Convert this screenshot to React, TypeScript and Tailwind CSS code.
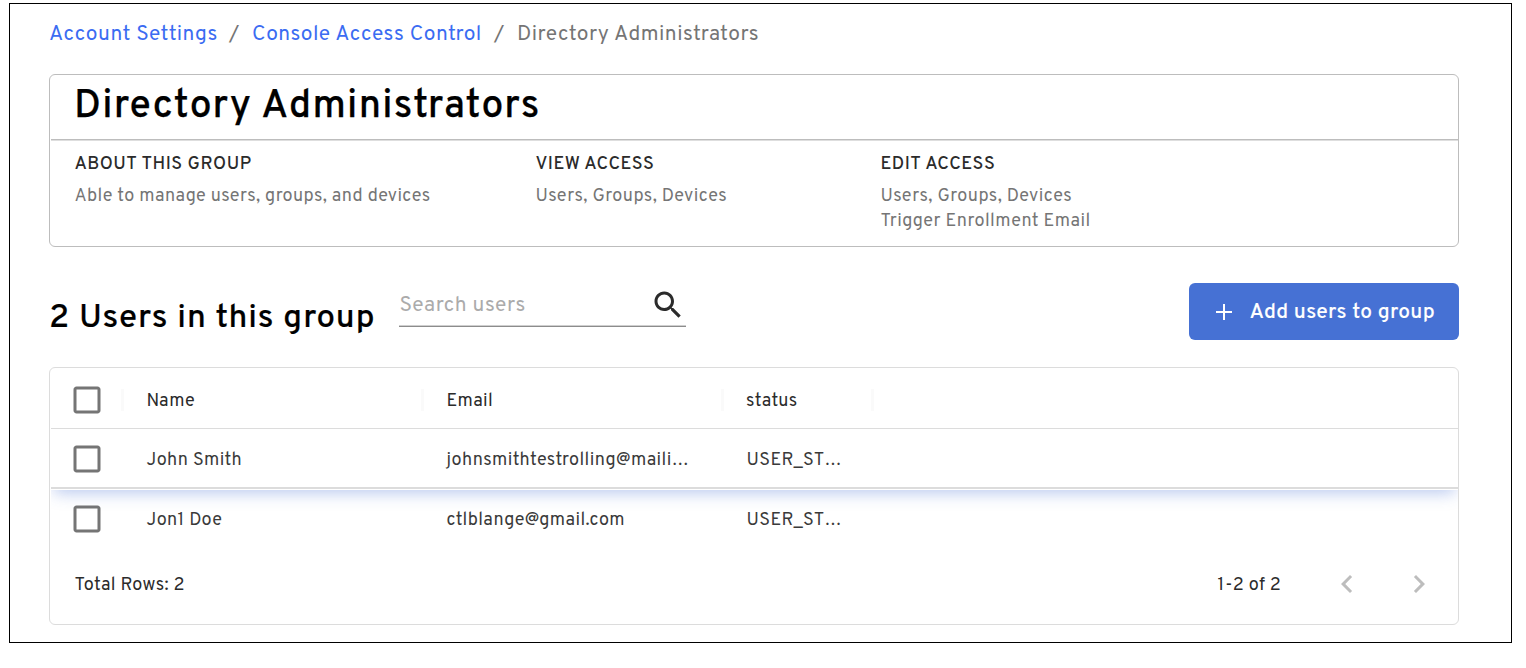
import React from "react";

const rows = [
  { name: "John Smith", email: "johnsmithtestrolling@maili…", status: "USER_ST…" },
  { name: "Jon1 Doe", email: "ctlblange@gmail.com", status: "USER_ST…" },
];

function Icon({ d, className }: { d: string; className: string }) {
  return (
    <svg viewBox="0 0 24 24" className={className} fill="currentColor" aria-hidden="true">
      <path d={d} />
    </svg>
  );
}

function Checkbox({ className }: { className: string }) {
  return (
    <span role="checkbox" aria-checked="false" className={className}>
      <Icon
        className="h-[36px] w-[36px] text-[#757575]"
        d="M19 5v14H5V5h14m0-2H5c-1.1 0-2 .9-2 2v14c0 1.1.9 2 2 2h14c1.1 0 2-.9 2-2V5c0-1.1-.9-2-2-2z"
      />
    </span>
  );
}

function Breadcrumbs() {
  return (
    <nav className="flex h-[30px] pt-[2px] text-[21px] leading-[30px] tracking-[0.48px] whitespace-nowrap text-[#757575]">
      <a className="w-[180px] text-[#3b6cf2]">Account Settings</a>
      <span className="w-[23px]">/</span>
      <a className="w-[242px] text-[#3b6cf2]">Console Access Control</a>
      <span className="w-[23px]">/</span>
      <span>Directory Administrators</span>
    </nav>
  );
}

function GroupCard() {
  return (
    <section className="mt-[26px] h-[173px] rounded-[6px] border border-[#bdbdbd]">
      <div className="ml-px h-[65px] border-b border-[#bdbdbd] pt-[3px] pl-[23px] shadow-[0_1px_0_#dedede]">
        <h1 className="text-[39px] leading-[59px] font-medium tracking-[1.27px] whitespace-nowrap text-black [-webkit-text-stroke:0.25px_black]">
          Directory Administrators
        </h1>
      </div>
      <div className="flex pt-[12px] pl-[24.5px] text-[18px] leading-[25px] tracking-[0.36px] whitespace-nowrap text-[#757575]">
        <div className="w-[461px]">
          <h3 className="font-medium tracking-[0.52px] text-[#2b2b2b]">ABOUT THIS GROUP</h3>
          <p className="mt-[7px]">Able to manage users, groups, and devices</p>
        </div>
        <div className="w-[345px]">
          <h3 className="font-medium tracking-[0.52px] text-[#2b2b2b]">VIEW ACCESS</h3>
          <p className="mt-[7px] tracking-[0.43px]">Users, Groups, Devices</p>
        </div>
        <div>
          <h3 className="font-medium tracking-[0.52px] text-[#2b2b2b]">EDIT ACCESS</h3>
          <p className="mt-[7px] tracking-[0.43px]">Users, Groups, Devices</p>
          <p className="tracking-[0.43px]">Trigger Enrollment Email</p>
        </div>
      </div>
    </section>
  );
}

function Toolbar() {
  return (
    <div className="mt-[36px] flex h-[57px] whitespace-nowrap">
      <h2 className="mt-[13px] w-[350px] text-[33px] leading-[46px] font-medium tracking-[0.92px] text-black [-webkit-text-stroke:0.2px_black]">
        2 Users in this group
      </h2>
      <div className="flex h-[44px] w-[287px] items-start justify-between border-b border-[#8c8c8c] shadow-[inset_0_-1px_0_#cfcfcf]">
        <span className="mt-[8px] ml-[0.5px] text-[21px] leading-[30px] tracking-[0.5px] text-[#ababab]">Search users</span>
        <Icon
          className="mt-[4px] h-[36px] w-[36px] text-[#2b2b2b]"
          d="M15.5 14h-.79l-.28-.27C15.41 12.59 16 11.11 16 9.5 16 5.91 13.09 3 9.5 3S3 5.91 3 9.5 5.91 16 9.5 16c1.61 0 3.09-.59 4.23-1.57l.27.28v.79l5 4.99L20.49 19l-4.99-5zm-6 0C7.01 14 5 11.99 5 9.5S7.01 5 9.5 5 14 7.01 14 9.5 11.99 14 9.5 14z"
        />
      </div>
      <button className="ml-auto flex h-[57px] w-[270px] items-center rounded-[6px] bg-[#4671d4] pl-[25.5px] text-white">
        <svg viewBox="0 0 18 18" className="h-[18px] w-[18px]" stroke="currentColor" strokeWidth="2" aria-hidden="true">
          <path d="M9 1v16M1 9h16" />
        </svg>
        <span className="mt-[2px] ml-[17px] text-[21px] leading-[30px] font-medium tracking-[0.29px] [-webkit-text-stroke:0.1px_white]">
          Add users to group
        </span>
      </button>
    </div>
  );
}

function Tick() {
  return <span className="h-[22px] w-[3px] bg-[#fafafa]" />;
}

function UsersTable() {
  return (
    <section className="mt-[27px] h-[258px] rounded-[6px] border border-[#dcdcdc] text-[18px] leading-[26px] tracking-[0.36px] whitespace-nowrap text-[#2b2b2b]">
      <div className="ml-px flex h-[61px] items-center border-b border-[#dcdcdc] pt-[4px]">
        <Checkbox className="ml-[18px] block h-[36px] w-[36px] shrink-0" />
        <span className="ml-[16px] flex"><Tick /></span>
        <span className="mt-[3px] w-[297px] pl-[22.5px]">Name</span>
        <Tick />
        <span className="mt-[3px] w-[297px] pl-[22.5px]">Email</span>
        <Tick />
        <span className="mt-[3px] w-[147px] pl-[22px] tracking-[0.45px]">status</span>
        <Tick />
      </div>
      <div className="ml-px">
        {rows.map((row, i) => (
          <div
            key={row.name}
            className={
              i === 0
                ? "h-[61px] bg-white shadow-[0_6px_15px_-3px_rgba(70,113,212,0.38)] [clip-path:inset(0_0_-24px_0)]"
                : "h-[58px]"
            }
          >
            <div
              className={
                i === 0
                  ? "flex h-[60px] items-center border-b-2 border-[#dcdcdc] pt-[2px] text-[#3a3a3a]"
                  : "flex h-[58px] items-center text-[#3a3a3a]"
              }
            >
              <Checkbox className="ml-[18px] block h-[36px] w-[36px] shrink-0" />
              <span className="mt-[3px] ml-[41.5px] w-[300px]">{row.name}</span>
              <span className="mt-[3px] w-[300px] tracking-[0.41px]">{row.email}</span>
              <span className="mt-[3px]">{row.status}</span>
            </div>
          </div>
        ))}
      </div>
      <div className="flex h-[71px] items-center pr-[21px] pl-[24.5px]">
        <span className="mt-[4px]">Total Rows: 2</span>
        <span className="mt-[4px] ml-auto w-[111.5px] tracking-[0.32px]">1-2 of 2</span>
        <Icon className="h-[36px] w-[36px] text-[#bdbdbd]" d="M15.41 7.41L14 6l-6 6 6 6 1.41-1.41L10.83 12z" />
        <Icon className="ml-[36px] h-[36px] w-[36px] text-[#bdbdbd]" d="M10 6L8.59 7.41 13.17 12l-4.58 4.59L10 18l6-6z" />
      </div>
    </section>
  );
}

export default function App() {
  return (
    <div className="h-[668px] w-[1526px] overflow-hidden bg-white pt-[3px] pl-[9px] font-['Overpass','Roboto',sans-serif]">
      <main className="h-[640px] w-[1503px] border border-black pt-[14px] pr-[52px] pl-[39px]">
        <Breadcrumbs />
        <GroupCard />
        <Toolbar />
        <UsersTable />
      </main>
    </div>
  );
}
